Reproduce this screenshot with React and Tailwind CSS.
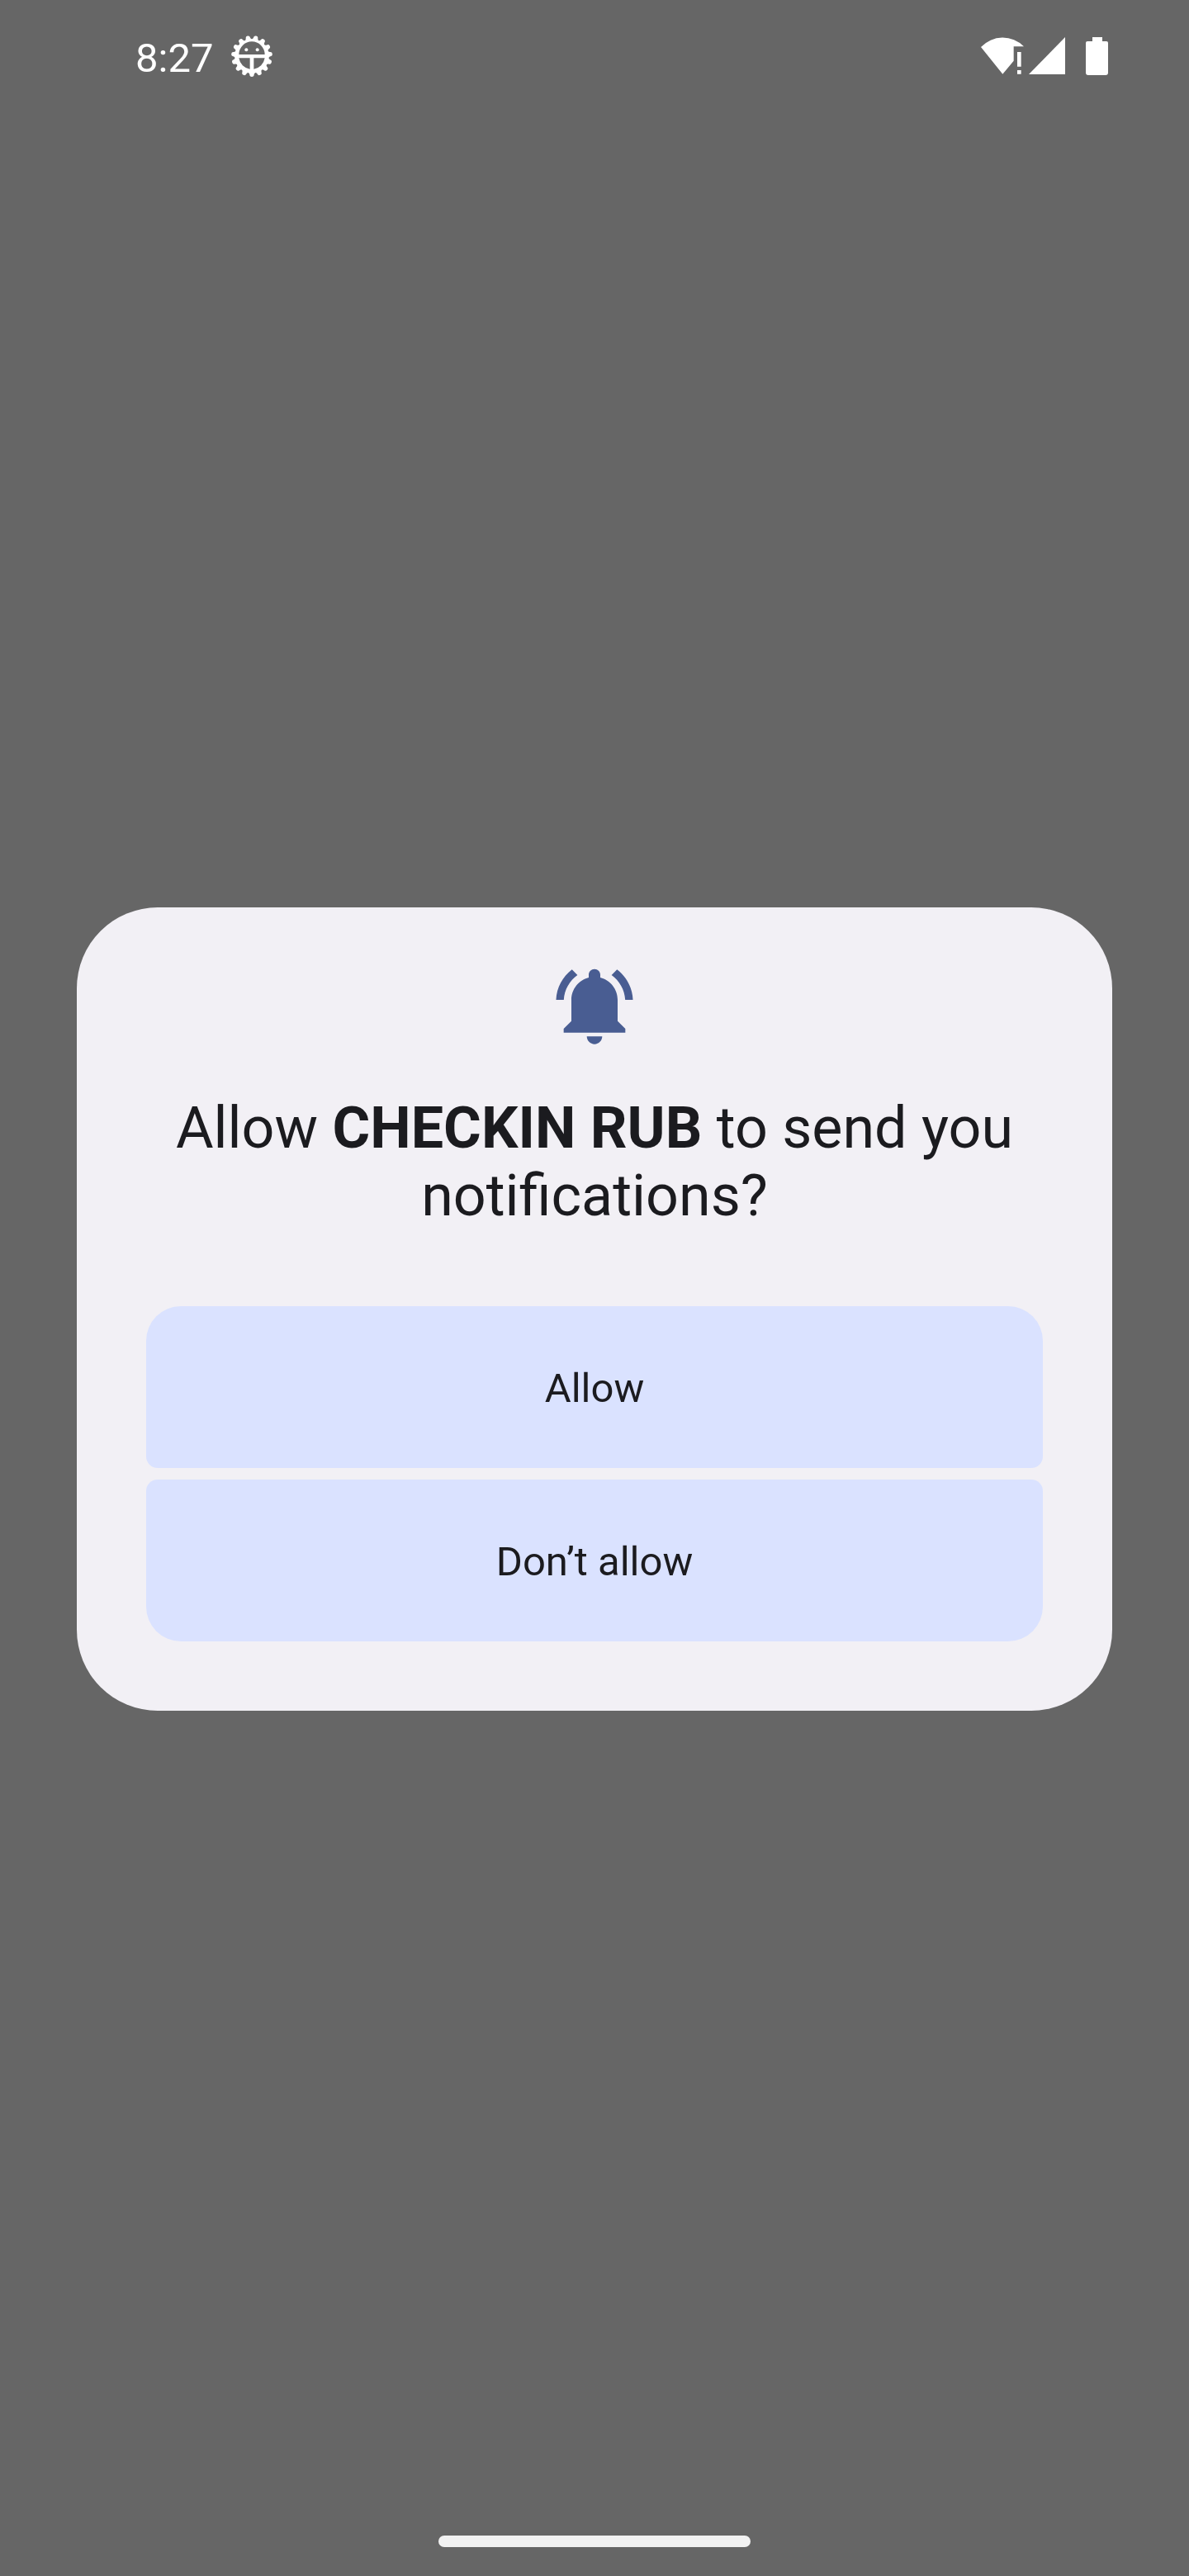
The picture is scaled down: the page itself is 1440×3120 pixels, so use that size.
const TEETH = Array.from({ length: 15 }, (_, i) => i * 24);

function CogFaceIcon() {
  return (
    <svg viewBox="-75 -75 150 150" className="size-[50px]" role="img" aria-label="System notification">
      <g fill="#fff">
        {TEETH.map((angle) => (
          <path
            key={angle}
            d="M-14 58 Q-9 62 -8 67 A8 8 0 0 0 8 67 Q9 62 14 58 Z"
            transform={`rotate(${angle})`}
          />
        ))}
        <path
          fillRule="evenodd"
          d="M0 -62 A62 62 0 1 1 0 62 A62 62 0 1 1 0 -62 Z M-47 -6 A47 47 0 0 1 47 -6 Z M-47 7 H-7 V47 A48 48 0 0 1 -47 7 Z M47 7 H7 V47 A48 48 0 0 0 47 7 Z"
        />
        <circle cx="-20" cy="-23" r="6" />
        <circle cx="20" cy="-23" r="6" />
      </g>
    </svg>
  );
}

function WifiAlertIcon() {
  return (
    <svg viewBox="54 45 156 135" className="h-[45px] w-[52px]" fill="#fff" role="img" aria-label="Wi-Fi, no internet">
      <path d="M133 179 L54 81 A108 108 0 0 1 210 79 H173 V131 Z" />
      <path d="M186 99 H200 V152 H186 Z M186 165 H200 V179 H186 Z" />
    </svg>
  );
}

function SignalIcon() {
  return (
    <svg viewBox="0 0 44 45" className="h-[45px] w-11" fill="#fff" role="img" aria-label="Mobile signal full">
      <path d="M44 0 V45 H0 Z" />
    </svg>
  );
}

function BatteryIcon() {
  return (
    <svg viewBox="0 0 27 46" className="h-[46px] w-[27px]" fill="#fff" role="img" aria-label="Battery full">
      <path d="M8 0 H20 V5 H25 A2 2 0 0 1 27 7 V43 A3 3 0 0 1 24 46 H3 A3 3 0 0 1 0 43 V7 A2 2 0 0 1 2 5 H8 Z" />
    </svg>
  );
}

function BellIcon() {
  return (
    <svg viewBox="0 0 24 24" className="size-28" fill="#495d92" aria-hidden="true">
      <path d="M7.58 4.08 L6.15 2.65 C3.75 4.48 2.17 7.3 2.03 10.5 h2 c.15-2.65 1.51-4.97 3.55-6.42 Z" />
      <path d="M19.97 10.5 h2 c-.15-3.2-1.73-6.02-4.12-7.85 l-1.42 1.43 c2.02 1.45 3.39 3.77 3.54 6.42 Z" />
      <path d="M18 10.5 C18 7.71 16.09 5.36 13.5 4.7 V4 C13.5 3.17 12.83 2.5 12 2.5 S10.5 3.17 10.5 4 V4.7 C7.91 5.36 6 7.71 6 10.5 V16 L4 18 V19 H20 V18 L18 16 Z" />
      <path d="M12 22 c1.1 0 2-.9 2-2 h-4 c0 1.1.9 2 2 2 Z" />
    </svg>
  );
}

function ChoiceButton({ children, className }) {
  return (
    <button
      type="button"
      className={`w-full bg-[#dae2ff] pt-[71px] pb-[67px] text-[49px] leading-[58px] text-[#1b1b1f] ${className}`}
    >
      {children}
    </button>
  );
}

export default function App() {
  return (
    <div className="flex min-h-screen flex-col bg-[#666666] font-['Roboto',sans-serif]">
      <header className="flex h-[135px] items-center justify-between pr-[98px] pl-[164px] text-white">
        <div className="flex items-center gap-[22px]">
          <time className="pt-1.5 text-[49px] leading-[58px]">8:27</time>
          <CogFaceIcon />
        </div>
        <div className="flex items-center">
          <WifiAlertIcon />
          <div className="ml-1.5 flex items-center gap-[25px]">
            <SignalIcon />
            <BatteryIcon />
          </div>
        </div>
      </header>

      <main className="flex flex-1 items-center px-[93px]">
        <section
          role="dialog"
          aria-labelledby="permission-title"
          className="flex w-full flex-col items-center rounded-[98px] bg-[#f2f0f5] px-[84px] pt-[63px] pb-[84px]"
        >
          <BellIcon />
          <h1
            id="permission-title"
            className="mt-[51px] text-center text-[70px] leading-[82px] font-normal text-[#1b1b1f]"
          >
            Allow <b className="font-bold">CHECKIN RUB</b> to send you notifications?
          </h1>
          <div className="mt-[93px] flex w-full flex-col gap-3.5">
            <ChoiceButton className="rounded-t-[42px] rounded-b-[14px]">Allow</ChoiceButton>
            <ChoiceButton className="rounded-t-[14px] rounded-b-[42px]">Don’t allow</ChoiceButton>
          </div>
        </section>
      </main>

      <footer className="flex h-[84px] items-center justify-center">
        <div className="h-3.5 w-[378px] rounded-full bg-[#f2f2f2]" />
      </footer>
    </div>
  );
}
